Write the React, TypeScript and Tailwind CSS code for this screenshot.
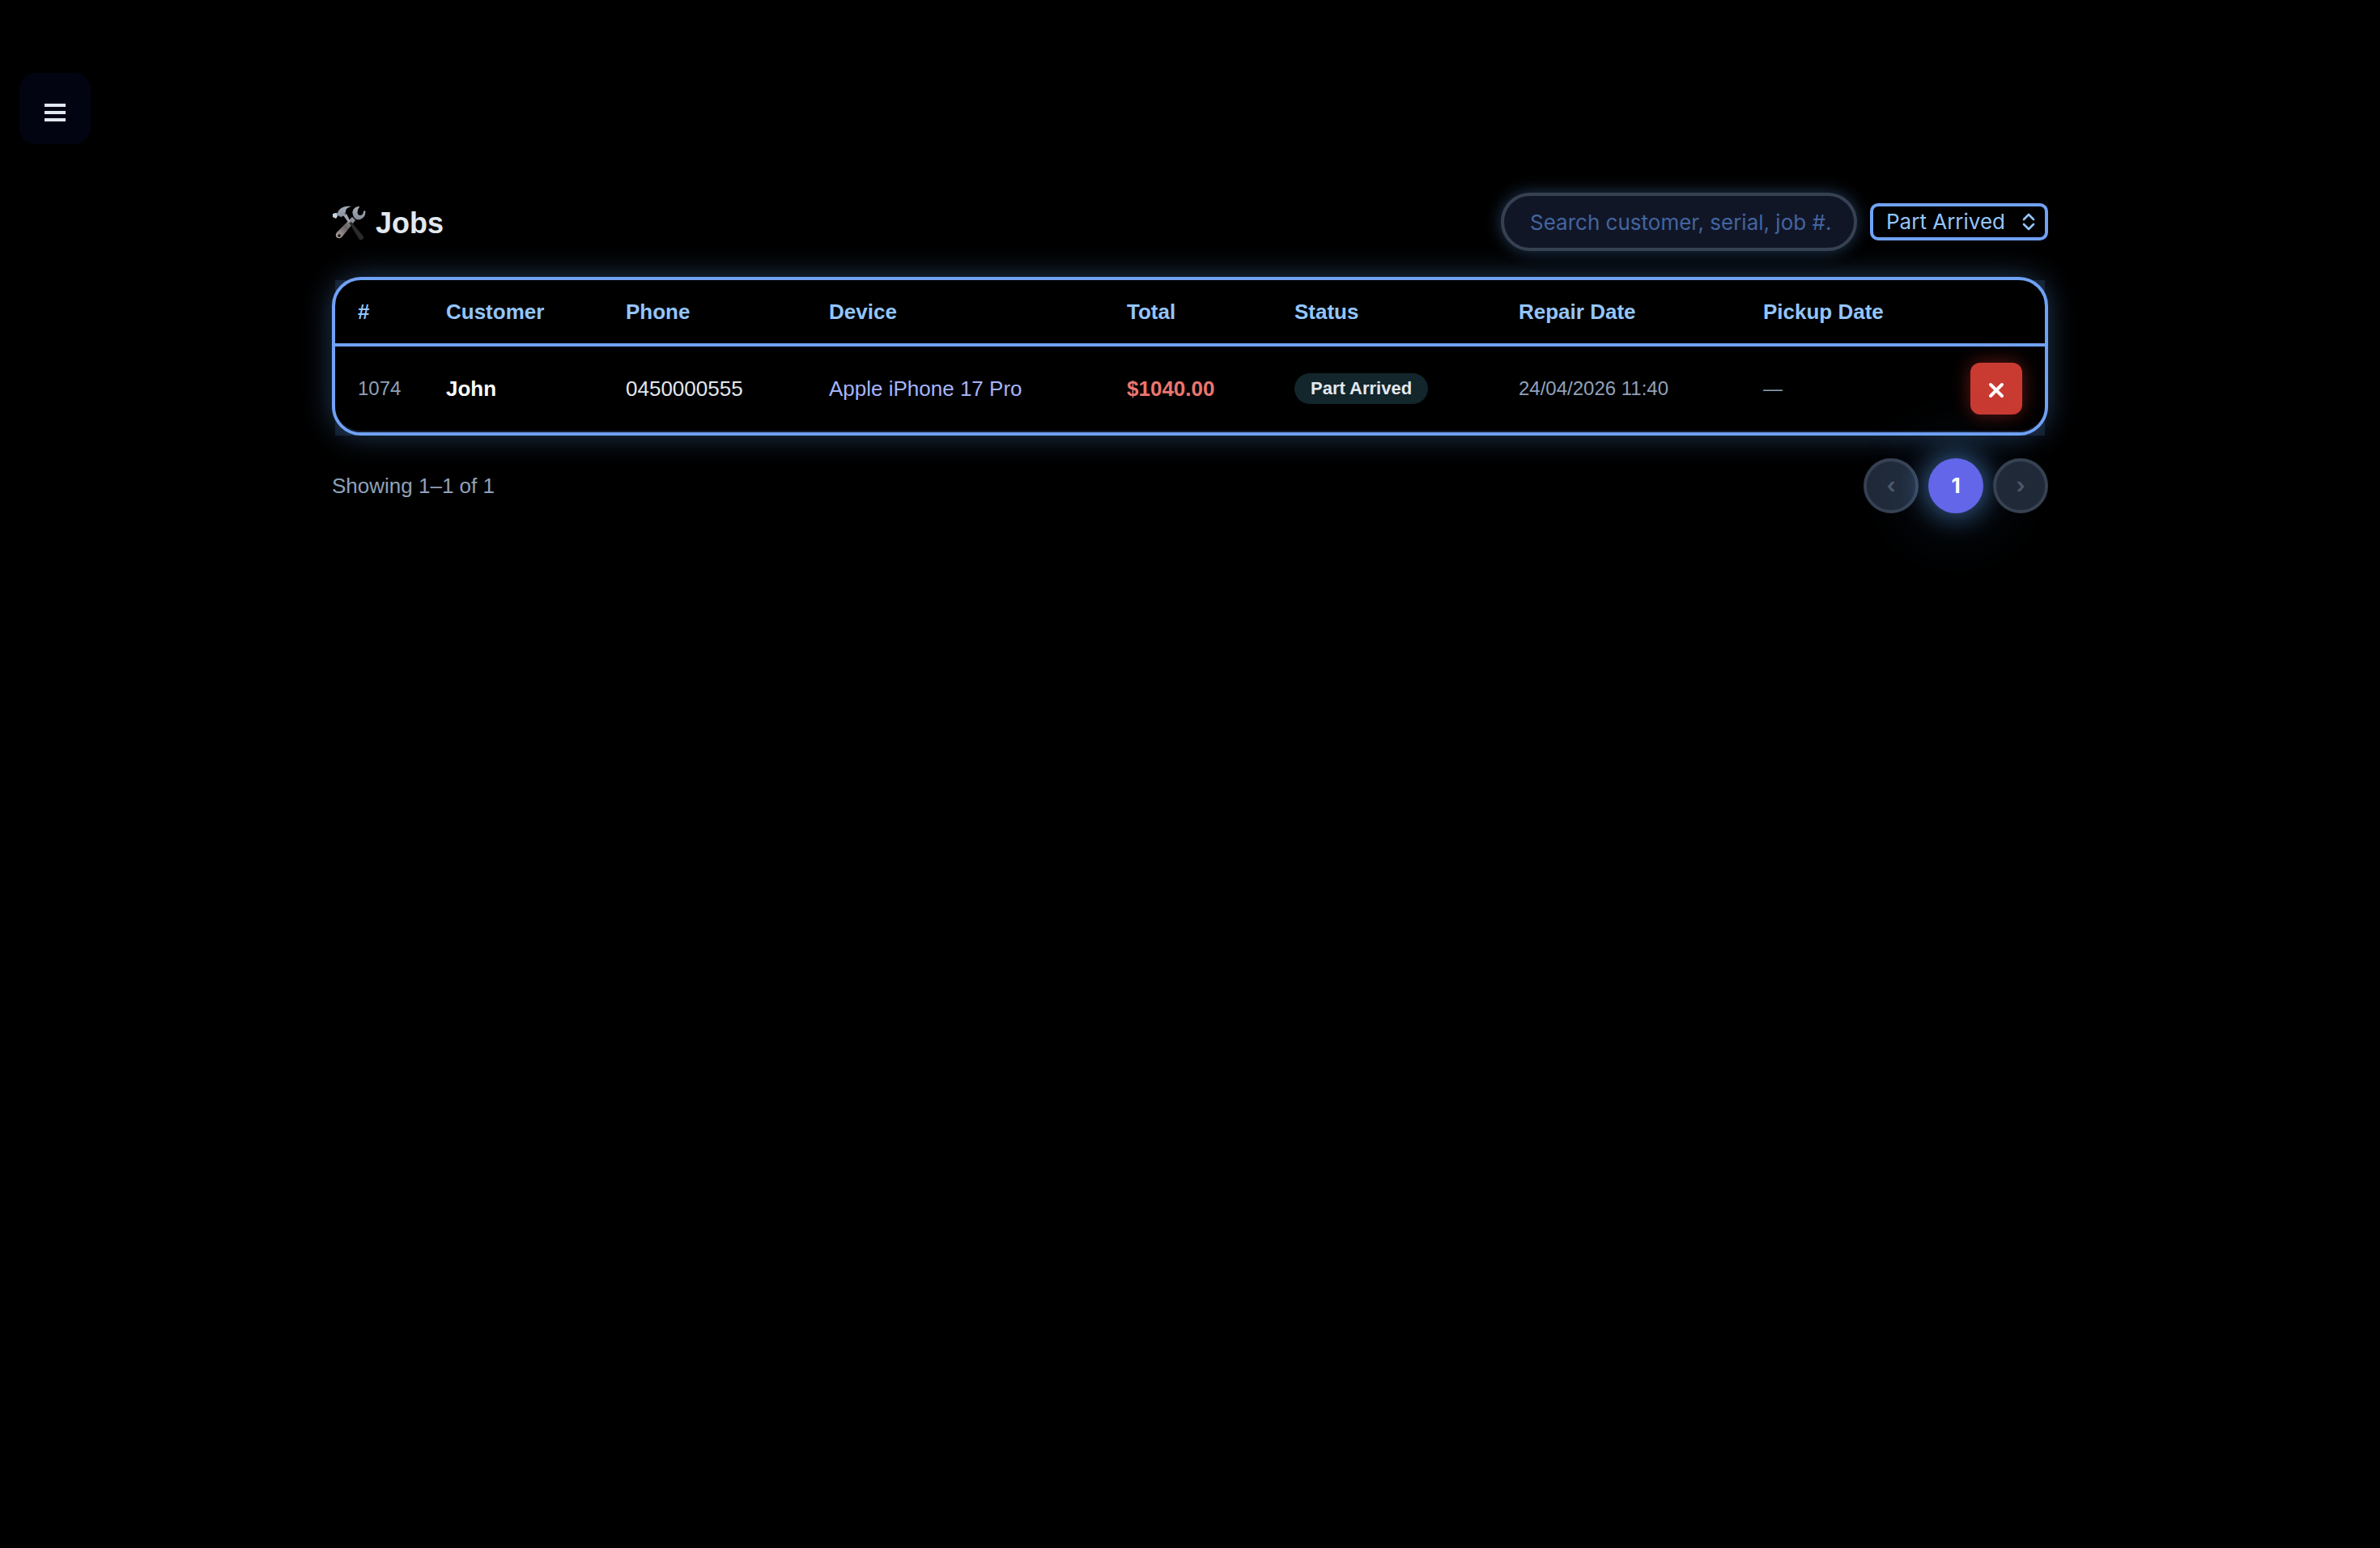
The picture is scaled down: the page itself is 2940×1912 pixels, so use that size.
const headings = [
  { label: "#", width: "w-[109px]" },
  { label: "Customer", width: "w-[222px]" },
  { label: "Phone", width: "w-[251px]" },
  { label: "Device", width: "w-[368px]" },
  { label: "Total", width: "w-[207px]" },
  { label: "Status", width: "w-[277px]" },
  { label: "Repair Date", width: "w-[302px]" },
  { label: "Pickup Date", width: "w-[236px]" },
];

const jobs = [
  {
    id: 1074,
    customer: "John",
    phone: "0450000555",
    device: "Apple iPhone 17 Pro",
    total: "$1040.00",
    status: "Part Arrived",
    repair: "24/04/2026 11:40",
    pickup: "—",
  },
];

function ToolsIcon() {
  return (
    <svg viewBox="0 0 42 44" className="h-11 w-[42px]" aria-hidden="true">
      <defs>
        <linearGradient id="steel" x1="0" y1="0" x2="0" y2="1">
          <stop offset="0" stopColor="#a3afba" />
          <stop offset="1" stopColor="#858c96" />
        </linearGradient>
        <linearGradient id="shaft" x1="1" y1="0" x2="0" y2="1">
          <stop offset="0" stopColor="#9aa3ad" />
          <stop offset="0.5" stopColor="#6a6566" />
          <stop offset="1" stopColor="#b3a5a3" />
        </linearGradient>
      </defs>
      {/* wrench */}
      <path d="M25 14l4 4-16 20c-4 5-11 1-7-5z" fill="url(#shaft)" />
      <circle cx="9" cy="37" r="1.8" fill="#111" />
      <path d="M34 1c-6 0-10 5-8 10 1 6 7 8 11 5 4-2 5-7 4-10l-2 1c0 3-2 5-4 5-3 0-4-3-3-6 0-2 1-3 2-4z" fill="url(#steel)" />
      {/* hammer */}
      <path d="M14 12l4-2 6 12-2 1z" fill="#9da4ae" />
      <path d="M21 21l3-1 15 18c1 3-2 5-5 4z" fill="#2a2a2c" />
      <path d="M4 9l3 0c2-6 8-9 17-8-4 1-7 3-7 6l-1 5-5 2-4-2-2 3-3-2z" fill="url(#steel)" />
      <path d="M1 10l4-1 2 4-2 3-4-2z" fill="#c4d3e0" />
    </svg>
  );
}

export default function App() {
  return (
    <div className="min-h-screen bg-black font-['Liberation_Sans',Arial,sans-serif] text-[26px] leading-8 text-slate-200">
      <nav className="px-6 pt-[90px]">
        <button
          type="button"
          aria-label="Open menu"
          className="flex size-[88px] items-center justify-center rounded-[20px] bg-[#020412] pt-2.5"
        >
          <svg viewBox="0 0 28 24" className="h-6 w-7" fill="#e2e8f0" aria-hidden="true">
            <path d="M1 1h26v4H1zM1 10h26v4H1zM1 19h26v4H1z" />
          </svg>
        </button>
      </nav>

      <main className="mx-auto max-w-[2200px] px-10 pt-[60px]">
        <header className="flex items-center justify-between">
          <h1 className="flex items-center gap-3 pt-1 text-4xl font-bold">
            <ToolsIcon />
            Jobs
          </h1>
          <div className="flex items-center gap-4">
            <input
              type="text"
              aria-label="Search jobs"
              placeholder="Search customer, serial, job #."
              className="h-18 w-[440px] rounded-full border-4 border-[#364152] bg-[#111627] pr-5 pl-8 font-[Inter,sans-serif] shadow-[0_0_20px_rgba(96,165,250,0.35)] placeholder:text-[#43659f]"
            />
            <div className="relative">
              <select
                aria-label="Status filter"
                className="block h-[46px] w-[220px] appearance-none rounded-[10px] border-4 border-[#70a2f5] bg-black pl-4 font-[Inter,sans-serif] text-[#93c5fd]"
              >
                <option>Part Arrived</option>
              </select>
              <svg
                viewBox="0 0 16 22"
                className="pointer-events-none absolute top-3 right-4 h-[22px] w-4 fill-none stroke-[#93c5fd] stroke-[2.6]"
                strokeLinecap="round"
                strokeLinejoin="round"
                aria-hidden="true"
              >
                <path d="M2 8l6-6 6 6M2 14l6 6 6-6" />
              </svg>
            </div>
          </div>
        </header>

        <div className="mt-8 bg-[#0e1622] bg-clip-content px-1 pt-1">
          <section className="-mx-1 -mt-1 rounded-[36px] border-4 border-[#70a2f5] bg-black shadow-[0_0_36px_rgba(96,165,250,0.35)]">
            <table className="w-full table-fixed border-separate border-spacing-0 text-left">
              <thead>
                <tr className="h-[82px] text-[#93c5fd]">
                  {headings.map((h) => (
                    <th key={h.label} className={`border-b-4 border-[#70a2f5] px-7 font-bold ${h.width}`}>
                      {h.label}
                    </th>
                  ))}
                  <th aria-label="Actions" className="border-b-4 border-[#70a2f5]" />
                </tr>
              </thead>
              <tbody>
                {jobs.map((job) => (
                  <tr key={job.id} className="h-[106px] whitespace-nowrap *:border-b-2 *:border-[#172033] *:px-7 *:first:rounded-bl-[32px] *:last:rounded-br-[32px]">
                    <td className="text-2xl text-slate-400">{job.id}</td>
                    <td className="font-bold text-white">{job.customer}</td>
                    <td>{job.phone}</td>
                    <td className="text-[#a5b4fc]">{job.device}</td>
                    <td className="font-bold text-[#ec766e]">{job.total}</td>
                    <td>
                      <span className="inline-block rounded-full bg-[#12262b] px-5 py-1 text-[22px] leading-[30px] font-bold">
                        {job.status}
                      </span>
                    </td>
                    <td className="text-2xl text-slate-400">{job.repair}</td>
                    <td className="text-2xl text-slate-400">{job.pickup}</td>
                    <td>
                      <button
                        type="button"
                        aria-label="Delete job"
                        className="ml-auto flex size-16 items-center justify-center rounded-xl bg-[#c93a31] shadow-[0_0_24px_rgba(220,60,50,0.45)]"
                      >
                        <svg viewBox="0 0 20 20" className="mt-1 size-5" stroke="#fff" strokeWidth="4" strokeLinecap="round">
                          <path d="M3 3l14 14M17 3L3 17" />
                        </svg>
                      </button>
                    </td>
                  </tr>
                ))}
              </tbody>
            </table>
          </section>
        </div>

        <footer className="mt-7 flex items-center justify-between">
          <p className="text-slate-400">Showing 1–1 of 1</p>
          <div className="flex gap-3 font-[Inter,sans-serif] font-bold">
            <button type="button" disabled className="size-[68px] rounded-full border-4 border-[#364152] bg-[#202938] text-[#4c5768]">
              ‹
            </button>
            <button
              type="button"
              className="size-[68px] rounded-full bg-[#6366e9] text-white shadow-[0_0_36px_rgba(96,165,250,0.7),0_0_90px_rgba(96,165,250,0.3)]"
            >
              1
            </button>
            <button type="button" disabled className="size-[68px] rounded-full border-4 border-[#364152] bg-[#202938] text-[#4c5768]">
              ›
            </button>
          </div>
        </footer>
      </main>
    </div>
  );
}
